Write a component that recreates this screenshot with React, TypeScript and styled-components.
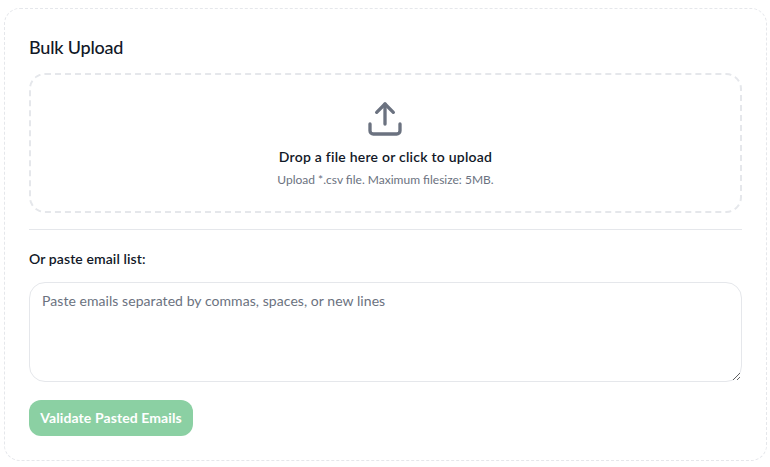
import React from 'react';
import styled, { createGlobalStyle } from 'styled-components';

const GlobalStyle = createGlobalStyle`
    html, body {
        margin: 0;
        padding: 0;
        background: #fff;
        font-family: Lato, sans-serif;
    }
`;

const Page = styled.div`
    padding: 8px 3px 5px 4px;
`;

const Card = styled.div`
    display: flex;
    flex-direction: column;
    padding: 24px;
    border: 1px dashed #e5e7eb;
    border-radius: 16px;
    background: #fff;
`;

const Title = styled.h2`
    margin: 0 0 12px;
    color: #111827;
    font-size: 18px;
    font-weight: 500;
    line-height: 28px;
    letter-spacing: -0.2px;
`;

const DropZone = styled.div`
    display: flex;
    flex-direction: column;
    align-items: center;
    height: 140px;
    box-sizing: border-box;
    padding-top: 24px;
    border: 2px dashed #e5e7eb;
    border-radius: 16px;
    cursor: pointer;
`;

const UploadIcon = styled.svg`
    display: block;
    width: 40px;
    height: 40px;
    margin-right: 1px;
    color: #6b7280;
`;

const DropTitle = styled.div`
    margin-top: 8px;
    color: #111827;
    font-size: 14px;
    font-weight: 600;
    line-height: 20px;
    letter-spacing: 0.23px;
`;

const DropHint = styled.div`
    margin-top: 5px;
    color: #6b7280;
    font-size: 12px;
    line-height: 16px;
`;

const Divider = styled.hr`
    width: 100%;
    margin: 16px 0 19px;
    border: none;
    border-top: 1px solid #e5e7eb;
`;

const Label = styled.label`
    display: block;
    margin-bottom: 13px;
    color: #111827;
    font-size: 14px;
    font-weight: 600;
    line-height: 20px;
    letter-spacing: 0.1px;
`;

const Textarea = styled.textarea`
    display: block;
    box-sizing: border-box;
    width: 100%;
    height: 100px;
    padding: 8px 12px 12px;
    border: 1px solid #e5e7eb;
    border-radius: 16px;
    outline: none;
    color: #111827;
    font-family: inherit;
    font-size: 14px;
    line-height: 20px;
    letter-spacing: 0.06px;

    &::placeholder {
        color: #6b7280;
        opacity: 1;
    }
`;

const Button = styled.button`
    align-self: flex-start;
    width: 164px;
    height: 36px;
    margin-top: 18px;
    padding: 0 0 2px;
    border: none;
    border-radius: 12px;
    background: #8bd0a3;
    color: #fff;
    font-family: inherit;
    font-size: 14px;
    font-weight: 700;
    letter-spacing: 0.1px;
`;

const App = () => (
    <>
        <GlobalStyle />
        <Page>
            <Card>
                <Title>Bulk Upload</Title>
                <DropZone>
                    <UploadIcon
                        viewBox="0 0 24 24"
                        fill="none"
                        stroke="currentColor"
                        strokeWidth={2}
                        strokeLinecap="round"
                        strokeLinejoin="round"
                    >
                        <path d="M12 15V3" />
                        <path d="M21 15v4a2 2 0 0 1-2 2H5a2 2 0 0 1-2-2v-4" />
                        <path d="m17 8-5-5-5 5" />
                    </UploadIcon>
                    <DropTitle>Drop a file here or click to upload</DropTitle>
                    <DropHint>Upload *.csv file. Maximum filesize: 5MB.</DropHint>
                </DropZone>
                <Divider />
                <Label htmlFor="emails">Or paste email list:</Label>
                <Textarea
                    id="emails"
                    placeholder="Paste emails separated by commas, spaces, or new lines"
                />
                <Button>Validate Pasted Emails</Button>
            </Card>
        </Page>
    </>
);

export default App;
